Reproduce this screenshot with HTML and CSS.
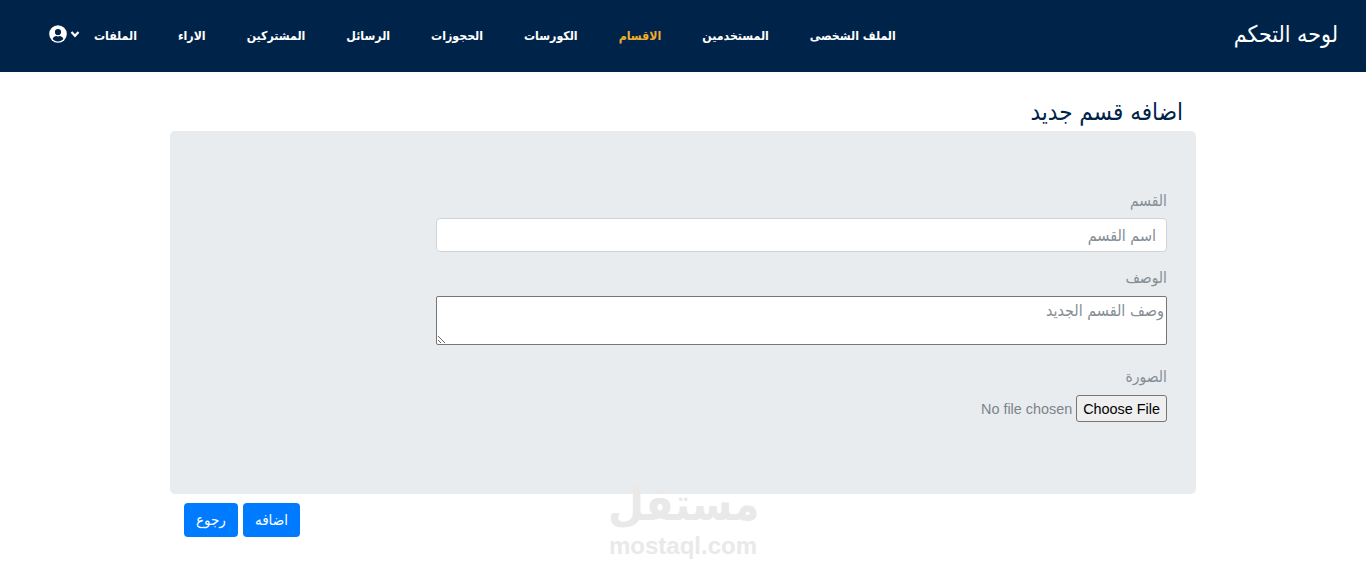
FILE: index.html
```html
<!DOCTYPE html>
<html lang="ar" dir="rtl">
<head>
    <meta charset="UTF-8">
    <meta name="viewport" content="width=device-width, initial-scale=1.0">
    <title>لوحه التحكم</title>
    <link rel="stylesheet" href="styles.css">
</head>
<body>

    <!-- Navbar -->
    <nav class="navbar">
        <a class="brand" href="#">لوحه التحكم</a>
        <ul class="nav-links">
            <li><a href="#">الملف الشخصى</a></li>
            <li><a href="#">المستخدمين</a></li>
            <li><a class="active" href="#">الاقسام</a></li>
            <li><a href="#">الكورسات</a></li>
            <li><a href="#">الحجوزات</a></li>
            <li><a href="#">الرسائل</a></li>
            <li><a href="#">المشتركين</a></li>
            <li><a href="#">الاراء</a></li>
            <li><a href="#">الملفات</a></li>
        </ul>
        <a class="user-menu" href="#" aria-label="user">
            <svg class="chevron" viewBox="0 0 10 10" width="10" height="10"><path d="M1.500 3 5 6.800 8.500 3" fill="none" stroke="#fff" stroke-width="2.200"/></svg>
            <svg class="user-icon" viewBox="0 0 18 18" width="18" height="18">
                <circle cx="9" cy="9" r="8.800" fill="#fff"/>
                <circle cx="9" cy="7" r="3.100" fill="#002349"/>
                <path d="M3.600 14c.8-2.300 2.600-3 3.600-3 .6.300 1.100.4 1.800.4s1.200-.1 1.800-.4c1 0 2.800.7 3.600 3-1.300 1.500-3.200 2.500-5.400 2.500S4.900 15.500 3.600 14z" fill="#002349"/>
            </svg>
        </a>
    </nav>

    <div class="content">
        <h2 class="page-title">اضافه قسم جديد</h2>

        <div class="panel">
            <form class="category-form">
                <div class="form-group">
                    <label for="name">القسم</label>
                    <input type="text" id="name" class="form-control" placeholder="اسم القسم">
                </div>
                <div class="form-group form-group-wide">
                    <label for="description">الوصف</label>
                    <textarea id="description" class="form-area" placeholder="وصف القسم الجديد"></textarea>
                </div>
                <div class="form-group">
                    <label for="image">الصورة</label>
                    <input type="file" id="image" class="form-file">
                </div>
            </form>
        </div>

        <div class="actions">
            <button class="btn">اضافه</button>
            <button class="btn">رجوع</button>
        </div>
    </div>

    <!-- Watermark -->
    <div class="watermark">
        <div class="watermark-ar">مستقل</div>
        <div class="watermark-en">mostaql.com</div>
    </div>

</body>
</html>
```

FILE: styles.css
```css
* {
    box-sizing: border-box;
}
body {
    font-family: "DejaVu Sans", "Liberation Sans", sans-serif;
    font-stretch: condensed;
    background-color: #fff;
    margin: 0;
    height: 568px;
    overflow: hidden;
    position: relative;
}
a {
    text-decoration: none;
}
.navbar {
    height: 72px;
    background-color: #002349;
    display: flex;
    align-items: center;
    padding: 0 28px 4px 49px;
}
.brand {
    color: #fff;
    font-size: 23px;
    margin-left: 338px;
}
.nav-links {
    list-style: none;
    display: flex;
    gap: 41px;
    margin: 0;
    padding: 0;
}
.nav-links a {
    color: #fff;
    font-size: 12.25px;
    font-weight: bold;
}
.nav-links a.active {
    color: #f0ad2e;
}
.user-menu {
    display: flex;
    align-items: center;
    gap: 3px;
    margin-right: auto;
    direction: ltr;
    flex-direction: row-reverse;
}
.content {
    width: 1026px;
    margin: 0 auto;
}
.page-title {
    font-size: 24px;
    font-weight: normal;
    color: #002349;
    margin: 0;
    padding: 26px 13px 0 0;
    height: 59px;
}
.panel {
    height: 363px;
    background-color: #e9ecef;
    border-radius: 5px;
    padding: 58px 29px 0 0;
}
.category-form {
    width: 731px;
}
.form-group {
    margin-bottom: 14px;
}
.form-group-wide {
    margin-bottom: 20px;
}
.form-group label {
    display: block;
    font-size: 15.5px;
    line-height: 24px;
    color: #868e96;
    margin-bottom: 5px;
}
.form-group + .form-group label {
    margin-bottom: 6px;
}
.form-control {
    display: block;
    width: 100%;
    height: 34px;
    padding: 0 10px;
    font: inherit;
    font-stretch: condensed;
    font-size: 16px;
    border: 1px solid #ced4da;
    border-radius: 4px;
    background-color: #fff;
}
.form-area {
    display: block;
    width: 100%;
    height: 49px;
    font: inherit;
    font-stretch: condensed;
    font-size: 16px;
    line-height: 24px;
    border: 1px solid #767676;
    border-radius: 2px;
    padding: 2px;
    background-color: #fff;
}
.form-control::placeholder, .form-area::placeholder {
    color: #868e96;
}
.form-file {
    display: block;
    width: 100%;
    font-family: "Liberation Sans", sans-serif;
    font-stretch: normal;
    font-size: 14.4px;
    color: #7b838b;
}
.form-file::file-selector-button {
    height: 27px;
    font: inherit;
    color: #000;
    padding: 0 6px;
    margin-left: 4px;
    background-color: #efefef;
    border: 1px solid #767676;
    border-radius: 3px;
}
.actions {
    display: flex;
    justify-content: flex-end;
    gap: 5px;
    padding: 9px 0 0 14px;
}
.btn {
    height: 34px;
    padding: 0 12px;
    font: inherit;
    font-stretch: condensed;
    font-size: 15px;
    color: #fff;
    background-color: #007bff;
    border: none;
    border-radius: 4px;
}
.watermark {
    position: absolute;
    left: 608px;
    top: 478px;
    width: 150px;
    text-align: center;
    color: #e9e9e9;
    direction: ltr;
}
.watermark-ar {
    font-size: 46px;
    font-weight: bold;
    line-height: 52px;
}
.watermark-en {
    font-family: "Liberation Sans", sans-serif;
    font-stretch: normal;
    font-size: 24px;
    font-weight: bold;
    line-height: 24px;
    margin-top: 4px;
}
```
